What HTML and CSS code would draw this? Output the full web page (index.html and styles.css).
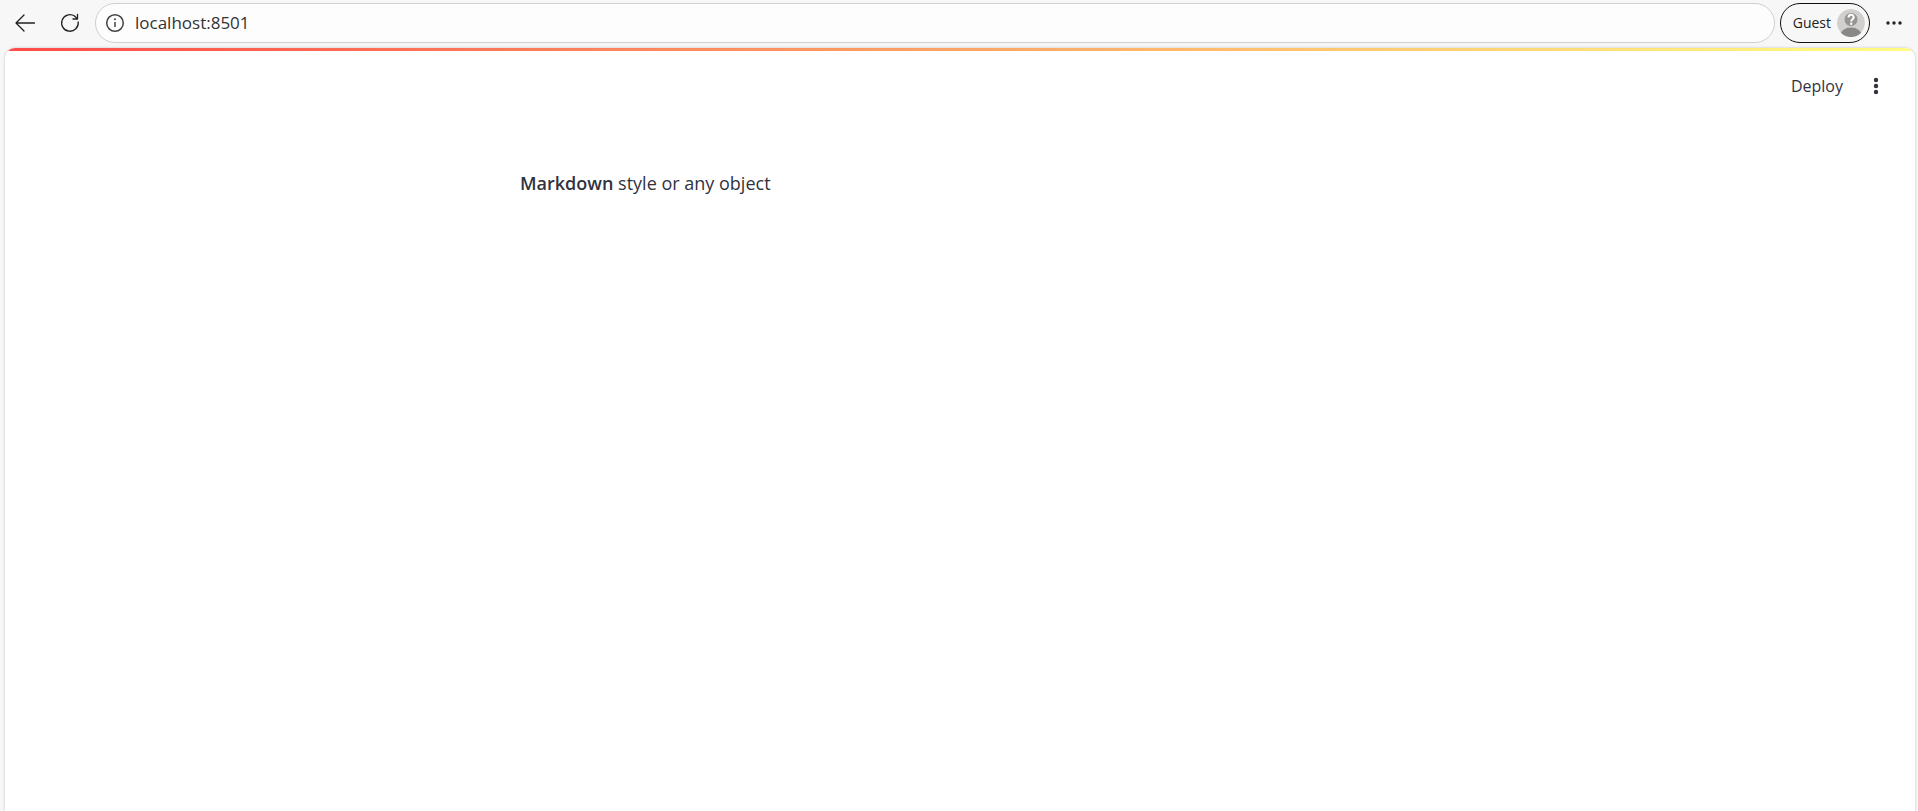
FILE: index.html
```html
<!DOCTYPE html>
<html lang="en">
<head>
    <meta charset="UTF-8">
    <meta name="viewport" content="width=device-width, initial-scale=1.0">
    <title>localhost:8501</title>
    <link rel="stylesheet" href="styles.css">
</head>
<body>

<!-- Browser toolbar -->
<div class="toolbar">
    <button class="nav-button" type="button" aria-label="Back">
        <svg width="22" height="20" viewBox="0 0 22 20" fill="none" stroke="#222" stroke-width="1.3" stroke-linecap="round" stroke-linejoin="round">
            <path d="M10 2L2 10l8 8M2 10h18.500"/>
        </svg>
    </button>
    <button class="nav-button" type="button" aria-label="Refresh">
        <svg width="20" height="20" viewBox="0 0 20 20" fill="none" stroke="#222" stroke-width="1.3" stroke-linecap="round" stroke-linejoin="round">
            <path d="M18.200 9A8.300 8.300 0 1 1 14.500 3L17.200 5.600M17.500 1.500v4.500h-4.500"/>
        </svg>
    </button>
    <div class="address-bar">
        <svg width="20" height="20" viewBox="0 0 20 20" fill="none" stroke="#444" stroke-width="1.500">
            <circle cx="10" cy="10" r="8.300"/>
            <path d="M10 9v5"/>
            <circle cx="10" cy="6.300" r="1" fill="#444" stroke="none"/>
        </svg>
        <input class="address-input" type="text" value="localhost:8501" aria-label="Address" spellcheck="false">
    </div>
    <button class="profile" type="button">
        <span class="profile-name">Guest</span>
        <svg width="28" height="28" viewBox="0 0 28 28">
            <defs>
                <clipPath id="avatar"><circle cx="14" cy="14" r="14"/></clipPath>
            </defs>
            <g clip-path="url(#avatar)">
                <circle cx="14" cy="14" r="14" fill="#d2d0ce"/>
                <ellipse cx="14" cy="27" rx="11" ry="8.500" fill="#8a8886"/>
                <circle cx="14" cy="10.500" r="7" fill="#979593" stroke="#d2d0ce" stroke-width="1"/>
            </g>
            <path d="M11.500 8.500c0-3.600 5.200-3.400 5.200-.3 0 2-2.500 2-2.500 4.400" fill="none" stroke="#fff" stroke-width="2"/>
            <circle cx="14.200" cy="14.700" r="1.200" fill="#fff"/>
        </svg>
    </button>
    <button class="more" type="button" aria-label="Settings and more">
        <svg width="18" height="6" viewBox="0 0 18 6" fill="#222">
            <circle cx="3" cy="3" r="1.700"/>
            <circle cx="9" cy="3" r="1.700"/>
            <circle cx="15" cy="3" r="1.700"/>
        </svg>
    </button>
</div>

<!-- Page -->
<div class="page">
    <div class="decoration"></div>
    <header class="header">
        <button class="deploy" type="button">Deploy</button>
        <button class="menu" type="button" aria-label="Main menu">
            <svg width="6" height="18" viewBox="0 0 6 18" fill="#31333f">
                <circle cx="3" cy="3" r="2.200"/>
                <circle cx="3" cy="9" r="2.200"/>
                <circle cx="3" cy="15" r="2.200"/>
            </svg>
        </button>
    </header>
    <main class="content">
        <p><strong>Markdown</strong> style or any object</p>
    </main>
</div>

</body>
</html>
```

FILE: styles.css
```css
* {
    box-sizing: border-box;
}
body {
    display: flex;
    flex-direction: column;
    min-height: 100vh;
    margin: 0;
    background-color: #f7f7f7;
    font-family: "Open Sans", sans-serif;
}
button {
    display: flex;
    align-items: center;
    justify-content: center;
    padding: 0;
    border: none;
    background: none;
    font-family: inherit;
    cursor: pointer;
}
/* Browser toolbar */
.toolbar {
    display: flex;
    align-items: center;
    height: 48px;
    padding: 0 0 2px 2px;
}
.nav-button {
    width: 45px;
    height: 40px;
}
.address-bar {
    display: flex;
    flex: 1;
    align-items: center;
    gap: 10px;
    height: 40px;
    margin: 0 5px 0 3px;
    padding: 0 9px;
    border: 1px solid #cfcfcf;
    border-radius: 20px;
    background-color: #fdfdfd;
}
.address-input {
    flex: 1;
    padding: 0 0 2px;
    border: none;
    outline: none;
    background: none;
    color: #333;
    font-family: inherit;
    font-size: 17px;
}
.profile {
    gap: 6px;
    height: 40px;
    padding: 0 4px 0 12px;
    border: 1px solid #111;
    border-radius: 20px;
    color: #222;
    font-size: 14px;
}
.profile-name {
    padding-bottom: 2px;
}
.more {
    width: 48px;
    height: 40px;
}
/* Page */
.page {
    flex: 1;
    margin: 0 3px 0 5px;
    overflow: hidden;
    border-radius: 10px 10px 0 0;
    background-color: white;
    box-shadow: 0 0 3px rgba(0, 0, 0, 0.2);
}
.decoration {
    height: 3px;
    background-image: linear-gradient(90deg, #ff4b4b, #fffd80);
}
.header {
    display: flex;
    align-items: center;
    justify-content: flex-end;
    gap: 20px;
    height: 70px;
    padding-right: 26px;
}
.deploy {
    color: #31333f;
    font-size: 16px;
}
.menu {
    width: 26px;
    height: 32px;
}
.content {
    max-width: 880px;
    margin: 0 auto;
    padding: 46px 0;
    color: #31333f;
    font-size: 18px;
    line-height: 32px;
}
.content p {
    margin: 0;
}
.content strong {
    font-weight: 600;
}
```
